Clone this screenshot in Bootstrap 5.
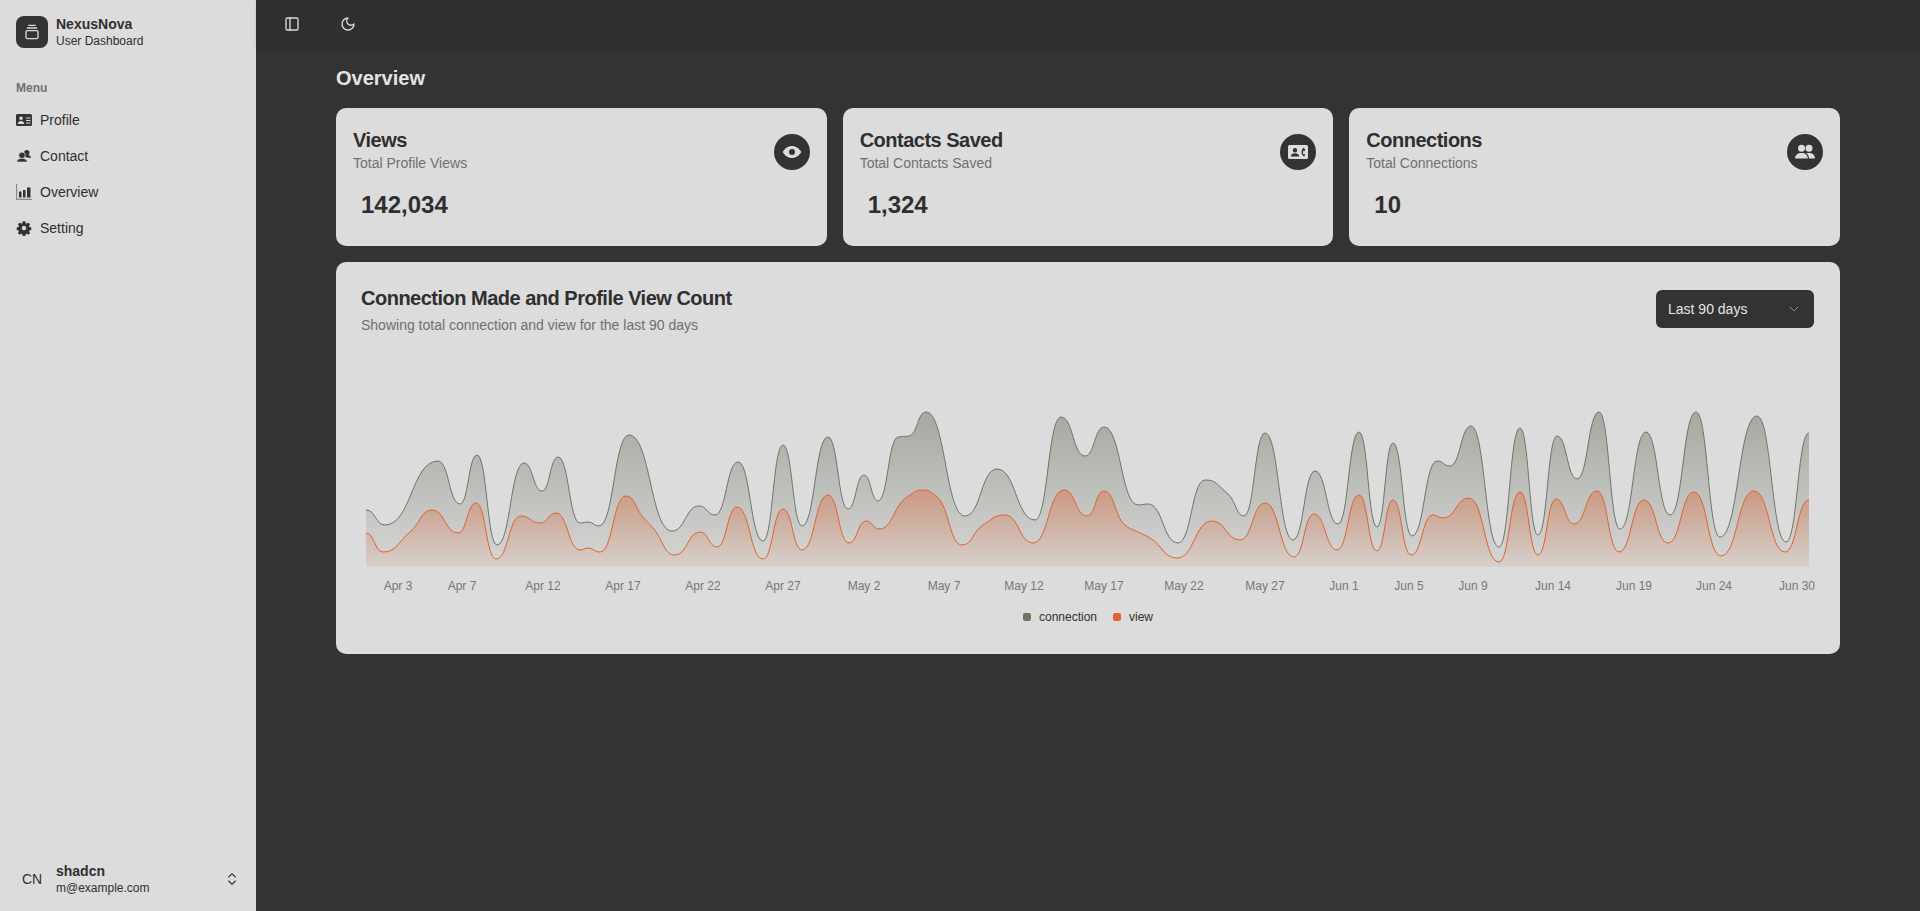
<!DOCTYPE html>
<html lang="en">
<head>
  <meta charset="UTF-8">
  <meta name="viewport" content="width=device-width, initial-scale=1.0">
  <title>NexusNova Dashboard</title>
  <link href="https://cdn.jsdelivr.net/npm/bootstrap@5.3.0/dist/css/bootstrap.min.css" rel="stylesheet">
  <style>
    body { font-family: "Liberation Sans", Arial, sans-serif; background: #333; color: #2f2f2f; height: 911px; overflow: hidden; }
    .shell { height: 911px; }
    .side-bar { width: 256px; background: #dcdcdc; flex: none; }
    .brand-box { width: 32px; height: 32px; background: #333; border-radius: 8px; color: #dcdcdc; }
    .brand-text { margin: -2px 0; }
    .brand-name { font-size: 14px; line-height: 18px; font-weight: 700; }
    .brand-sub { font-size: 12px; line-height: 16px; }
    .menu-title { font-size: 12px; font-weight: 700; color: #6f6f72; line-height: 16px; padding: 0 16px; margin-top: 32px; margin-bottom: 6px; }
    .menu-link { height: 36px; padding: 0 16px; gap: 8px; font-size: 14px; color: #2f2f2f; text-decoration: none; }
    .user-row { height: 64px; padding: 0 16px 0 22px; }
    .user-initials { width: 34px; font-size: 14px; }
    .top-bar { height: 48px; background: #303030; box-shadow: 0 1px 3px rgba(0,0,0,.12); padding-left: 28px; gap: 40px; color: #dcdcdc; }
    .content-area { padding: 0 80px; }
    .page-title { font-size: 20px; line-height: 28px; font-weight: 700; color: #e4e4e4; margin: 16px 0 16px; }
    .stat-grid { display: grid; grid-template-columns: repeat(3, 1fr); gap: 16px; }
    .panel { background: #dcdcdc; border-radius: 10px; }
    .stat-panel { height: 138px; padding: 20px 17px 0; }
    .stat-name { font-size: 20px; line-height: 24px; font-weight: 700; letter-spacing: -.5px; }
    .stat-sub, .chart-sub { font-size: 14px; line-height: 20px; color: #6f6f72; }
    .stat-sub { margin-top: 1px; }
    .stat-value { font-size: 24px; line-height: 32px; font-weight: 700; margin: 16px 0 0 8px; }
    .stat-icon { width: 36px; height: 36px; border-radius: 50%; background: #333; color: #dcdcdc; margin-top: 6px; }
    .chart-panel { height: 392px; margin-top: 16px; }
    .chart-head { padding: 24px 26px 0 25px; }
    .chart-title { font-size: 20px; line-height: 24px; font-weight: 700; margin-bottom: 5px; letter-spacing: -.5px; }
    .range-pick { width: 158px; height: 38px; background: #333; color: #e4e4e4; border-radius: 6px; font-size: 14px; padding: 0 12px; margin-top: 4px; }
    .chart-svg { display: block; width: 100%; height: 265px; }
    .axis-label { font-size: 12px; fill: #77777a; text-anchor: middle; font-family: "Liberation Sans", Arial, sans-serif; }
    .legend-row { gap: 16px; font-size: 12px; line-height: 16px; margin-top: 9px; }
    .legend-dot { width: 8px; height: 8px; border-radius: 2px; }
    .dot-conn { background: #6f7565; }
    .dot-view { background: #e0622f; }
  </style>
</head>
<body>

<div class="d-flex shell">
  <!-- Sidebar -->
  <aside class="side-bar d-flex flex-column">
    <div class="d-flex align-items-center gap-2 px-3 pt-3">
      <div class="brand-box d-flex align-items-center justify-content-center">
        <svg width="16" height="16" viewBox="0 0 24 24" fill="none" stroke="currentColor" stroke-width="2" stroke-linecap="round" stroke-linejoin="round"><rect x="3" y="10" width="18" height="12" rx="2"/><path d="M7 2h10"/><path d="M5 6h14"/></svg>
      </div>
      <div class="brand-text">
        <div class="brand-name">NexusNova</div>
        <div class="brand-sub">User Dashboard</div>
      </div>
    </div>

    <div class="menu-title">Menu</div>
    <a href="#" class="menu-link d-flex align-items-center">
      <svg width="16" height="16" viewBox="0 0 16 16" fill="#333"><path fill-rule="evenodd" d="M1.500 2h13A1.500 1.500 0 0 1 16 3.500v9a1.500 1.500 0 0 1-1.500 1.500h-13A1.500 1.500 0 0 1 0 12.500v-9A1.500 1.500 0 0 1 1.500 2zM5 4.500a1.800 1.800 0 1 0 0 3.600 1.800 1.800 0 0 0 0-3.600zM1.800 12h6.400C8.100 10.300 6.800 9 5 9s-3.100 1.300-3.200 3zM10 5.500v1h4.500v-1zm0 2.500v1h4.500V8zm0 2.500v1h4.500v-1z"/></svg>
      Profile
    </a>
    <a href="#" class="menu-link d-flex align-items-center">
      <svg width="16" height="16" viewBox="0 0 16 16" fill="#333"><circle cx="10.800" cy="4.800" r="2.700"/><path d="M7 9c.8-1.500 2.200-2.200 3.800-2.200 2 0 3.700 1 4.400 3H11.500C10.300 9 8.500 8.600 7 9z"/><circle cx="6" cy="7.300" r="3.300" stroke="#dcdcdc" stroke-width=".8"/><path d="M.6 14c.3-2.300 2.600-3.700 5.400-3.700s5.100 1.400 5.400 3.700z" stroke="#dcdcdc" stroke-width=".6"/></svg>
      Contact
    </a>
    <a href="#" class="menu-link d-flex align-items-center">
      <svg width="16" height="16" viewBox="0 0 16 16"><path d="M.6 0v15.400H16" fill="none" stroke="#8a8a8a" stroke-width="1.200"/><path fill="#333" d="M3 7.500h2.500v6H3zM7 6h2.500v7.500H7zM11 3.500h3.500v10H11z"/></svg>
      Overview
    </a>
    <a href="#" class="menu-link d-flex align-items-center">
      <svg width="16" height="16" viewBox="-1 -1 18 18" fill="#333"><path fill-rule="evenodd" d="M6.500.5h3l.4 2.100 1.100.5 1.800-1.200 2.100 2.100-1.200 1.800.5 1.100 2 .4v3l-2 .4-.5 1.100 1.200 1.800-2.100 2.100-1.800-1.200-1.100.5-.4 2h-3l-.4-2-1.100-.5-1.800 1.200-2.100-2.100 1.200-1.800-.5-1.100-2-.4v-3l2-.4.5-1.100-1.200-1.800 2.100-2.100 1.800 1.200 1.100-.5zM8 5.500a2.500 2.500 0 1 0 0 5 2.500 2.500 0 0 0 0-5z"/></svg>
      Setting
    </a>

    <div class="user-row d-flex align-items-center mt-auto">
      <div class="user-initials">CN</div>
      <div class="flex-grow-1">
        <div class="brand-name">shadcn</div>
        <div class="brand-sub">m@example.com</div>
      </div>
      <svg width="16" height="16" viewBox="0 0 24 24" fill="none" stroke="currentColor" stroke-width="1.600" stroke-linecap="round" stroke-linejoin="round"><path d="m7 15 5 5 5-5"/><path d="m7 9 5-5 5 5"/></svg>
    </div>
  </aside>

  <!-- Main -->
  <div class="flex-grow-1">
    <div class="top-bar d-flex align-items-center">
      <svg width="16" height="16" viewBox="0 0 24 24" fill="none" stroke="currentColor" stroke-width="2" stroke-linecap="round" stroke-linejoin="round"><rect x="3" y="3" width="18" height="18" rx="2"/><path d="M9 3v18"/></svg>
      <svg width="16" height="16" viewBox="0 0 24 24" fill="none" stroke="currentColor" stroke-width="2" stroke-linecap="round" stroke-linejoin="round"><path d="M12 3a6 6 0 0 0 9 9 9 9 0 1 1-9-9Z"/></svg>
    </div>

    <div class="content-area">
      <h1 class="page-title">Overview</h1>

      <div class="stat-grid">
        <div class="panel stat-panel d-flex justify-content-between align-items-start">
          <div>
            <div class="stat-name">Views</div>
            <div class="stat-sub">Total Profile Views</div>
            <div class="stat-value">142,034</div>
          </div>
          <div class="stat-icon d-flex align-items-center justify-content-center">
            <svg width="20" height="20" viewBox="0 0 20 20" fill="currentColor"><path fill-rule="evenodd" d="M10 4c4 0 7.400 2.600 9.300 6-1.900 3.400-5.300 6-9.300 6s-7.400-2.600-9.300-6C2.600 6.600 6 4 10 4zm0 3a3 3 0 1 0 0 6 3 3 0 0 0 0-6z"/></svg>
          </div>
        </div>

        <div class="panel stat-panel d-flex justify-content-between align-items-start">
          <div>
            <div class="stat-name">Contacts Saved</div>
            <div class="stat-sub">Total Contacts Saved</div>
            <div class="stat-value">1,324</div>
          </div>
          <div class="stat-icon d-flex align-items-center justify-content-center">
            <svg width="20" height="20" viewBox="0 0 20 20" fill="currentColor"><path fill-rule="evenodd" d="M1.500 3h17A1.500 1.500 0 0 1 20 4.500v11a1.500 1.500 0 0 1-1.500 1.500h-17A1.500 1.500 0 0 1 0 15.500v-11A1.500 1.500 0 0 1 1.500 3zM7 6a2.200 2.200 0 1 0 0 4.400A2.200 2.200 0 0 0 7 6zM2.800 14.500h8.400C11 12.500 9.300 11.300 7 11.300s-4 1.200-4.200 3.200zM15.800 5.500c-1.500 1.200-2.300 3-2.300 4.500s.8 3.300 2.300 4.500l1.500-1.500-1.200-1.200-.8.500c-.4-.9-.4-2.700 0-3.600l.8.500 1.200-1.200z"/></svg>
          </div>
        </div>

        <div class="panel stat-panel d-flex justify-content-between align-items-start">
          <div>
            <div class="stat-name">Connections</div>
            <div class="stat-sub">Total Connections</div>
            <div class="stat-value">10</div>
          </div>
          <div class="stat-icon d-flex align-items-center justify-content-center">
            <svg width="20" height="20" viewBox="0 0 20 20" fill="currentColor"><circle cx="6.500" cy="6.300" r="3.500"/><circle cx="14" cy="6.300" r="3.500"/><path d="M0 16.500c0-3.500 2.800-5.500 6.500-5.500s6.300 2 6.300 5.500z"/><path d="M14 16.500c0-2.300-1-4.200-2.700-5.100.8-.3 1.700-.4 2.700-.4 3.500 0 6 2 6 5.500z"/></svg>
          </div>
        </div>
      </div>

      <div class="panel chart-panel">
        <div class="chart-head d-flex justify-content-between align-items-start">
          <div>
            <div class="chart-title">Connection Made and Profile View Count</div>
            <div class="chart-sub">Showing total connection and view for the last 90 days</div>
          </div>
          <div class="range-pick d-flex align-items-center justify-content-between">
            Last 90 days
            <svg width="16" height="16" viewBox="0 0 24 24" fill="none" stroke="#8a8a8a" stroke-width="1.500" stroke-linecap="round" stroke-linejoin="round"><path d="m6 9 6 6 6-6"/></svg>
          </div>
        </div>

        <svg id="chart" class="chart-svg" viewBox="336 335 1504 265">
          <defs>
            <linearGradient id="fillConn" gradientUnits="userSpaceOnUse" x1="0" y1="412" x2="0" y2="567">
              <stop offset="0" stop-color="#6f7565" stop-opacity=".5"/>
              <stop offset="1" stop-color="#6f7565" stop-opacity=".05"/>
            </linearGradient>
            <linearGradient id="fillView" gradientUnits="userSpaceOnUse" x1="0" y1="490" x2="0" y2="567">
              <stop offset="0" stop-color="#e0622f" stop-opacity=".4"/>
              <stop offset="1" stop-color="#e0622f" stop-opacity=".05"/>
            </linearGradient>
          </defs>
          <path id="areaConn" fill="url(#fillConn)"/>
          <path id="areaView" fill="url(#fillView)"/>
          <path id="lineConn" fill="none" stroke="#6f7565" stroke-width="1"/>
          <path id="lineView" fill="none" stroke="#e0622f" stroke-width="1"/>
          <g id="axis"></g>
        </svg>

        <div class="legend-row d-flex justify-content-center">
          <div class="d-flex align-items-center gap-2"><span class="legend-dot dot-conn"></span>connection</div>
          <div class="d-flex align-items-center gap-2"><span class="legend-dot dot-view"></span>view</div>
        </div>
      </div>
    </div>
  </div>
</div>

<script src="https://cdn.jsdelivr.net/npm/bootstrap@5.3.0/dist/js/bootstrap.bundle.min.js"></script>
<script>
  // Curve turning points read off the reference, in page pixels
  const connection = [[366,510],[385,525],[438,461],[460,504],[477,455],[497,545],[524,463],[542,491],[558,457],[580,523],[588,522],[599,526],[629,435],[672,531],[699,506],[715,515],[738,462],[763,541],[783,445],[802,526],[828,437],[848,509],[864,475],[878,501],[898,437],[909,436],[926,412],[965,516],[997,469],[1035,520],[1061,417],[1085,456],[1104,427],[1138,505],[1148,504],[1178,543],[1205,480],[1228,494],[1244,516],[1265,433],[1293,540],[1315,471],[1338,524],[1359,432],[1377,527],[1393,443],[1412,536],[1437,461],[1450,466],[1471,426],[1499,547],[1520,428],[1538,535],[1557,436],[1577,479],[1599,412],[1620,529],[1646,432],[1670,515],[1696,412],[1720,537],[1757,416],[1786,542],[1809,433]];
  const views = [[366,533],[383,552],[410,532],[432,510],[458,533],[476,503],[496,559],[521,516],[540,523],[556,513],[580,550],[588,548],[600,552],[626,496],[643,517],[653,528],[675,555],[700,532],[717,547],[737,507],[763,559],[783,509],[802,550],[828,495],[849,543],[866,521],[879,529],[907,497],[923,490],[937,497],[962,545],[983,525],[1005,515],[1033,543],[1064,490],[1087,516],[1104,491],[1125,525],[1138,532],[1150,538],[1177,558],[1212,521],[1240,540],[1265,503],[1294,557],[1314,514],[1337,550],[1359,495],[1377,551],[1393,500],[1411,555],[1433,515],[1443,518],[1469,498],[1499,562],[1520,492],[1538,555],[1556,499],[1574,524],[1597,491],[1619,552],[1644,500],[1668,543],[1694,492],[1721,556],[1754,491],[1785,552],[1809,500]];
  const ticks = [["Apr 3",398],["Apr 7",462],["Apr 12",543],["Apr 17",623],["Apr 22",703],["Apr 27",783],["May 2",864],["May 7",944],["May 12",1024],["May 17",1104],["May 22",1184],["May 27",1265],["Jun 1",1344],["Jun 5",1409],["Jun 9",1473],["Jun 14",1553],["Jun 19",1634],["Jun 24",1714],["Jun 30",1797]];
  const baseY = 567;

  // Monotone cubic: flat at turning points, slope kept elsewhere
  function curvePath(pts) {
    const slopes = pts.map((p, i) => {
      if (i === 0 || i === pts.length - 1) return 0;
      const a = (p[1] - pts[i-1][1]) / (p[0] - pts[i-1][0]);
      const b = (pts[i+1][1] - p[1]) / (pts[i+1][0] - p[0]);
      return a * b <= 0 ? 0 : 2 * a * b / (a + b);
    });
    let d = "M" + pts[0][0] + "," + pts[0][1];
    for (let i = 1; i < pts.length; i++) {
      const dx = (pts[i][0] - pts[i-1][0]) / 2;
      d += "C" + (pts[i-1][0] + dx) + "," + (pts[i-1][1] + slopes[i-1] * dx) + " " +
           (pts[i][0] - dx) + "," + (pts[i][1] - slopes[i] * dx) + " " + pts[i][0] + "," + pts[i][1];
    }
    return d;
  }

  function drawSeries(pts, lineId, areaId) {
    const line = curvePath(pts);
    document.getElementById(lineId).setAttribute("d", line);
    document.getElementById(areaId).setAttribute("d", line + "L" + pts[pts.length-1][0] + "," + baseY + "L" + pts[0][0] + "," + baseY + "Z");
  }
  drawSeries(connection, "lineConn", "areaConn");
  drawSeries(views, "lineView", "areaView");

  const axis = document.getElementById("axis");
  ticks.forEach(t => {
    const label = document.createElementNS("http://www.w3.org/2000/svg", "text");
    label.setAttribute("x", t[1]);
    label.setAttribute("y", 590);
    label.setAttribute("class", "axis-label");
    label.textContent = t[0];
    axis.appendChild(label);
  });
</script>

</body>
</html>
